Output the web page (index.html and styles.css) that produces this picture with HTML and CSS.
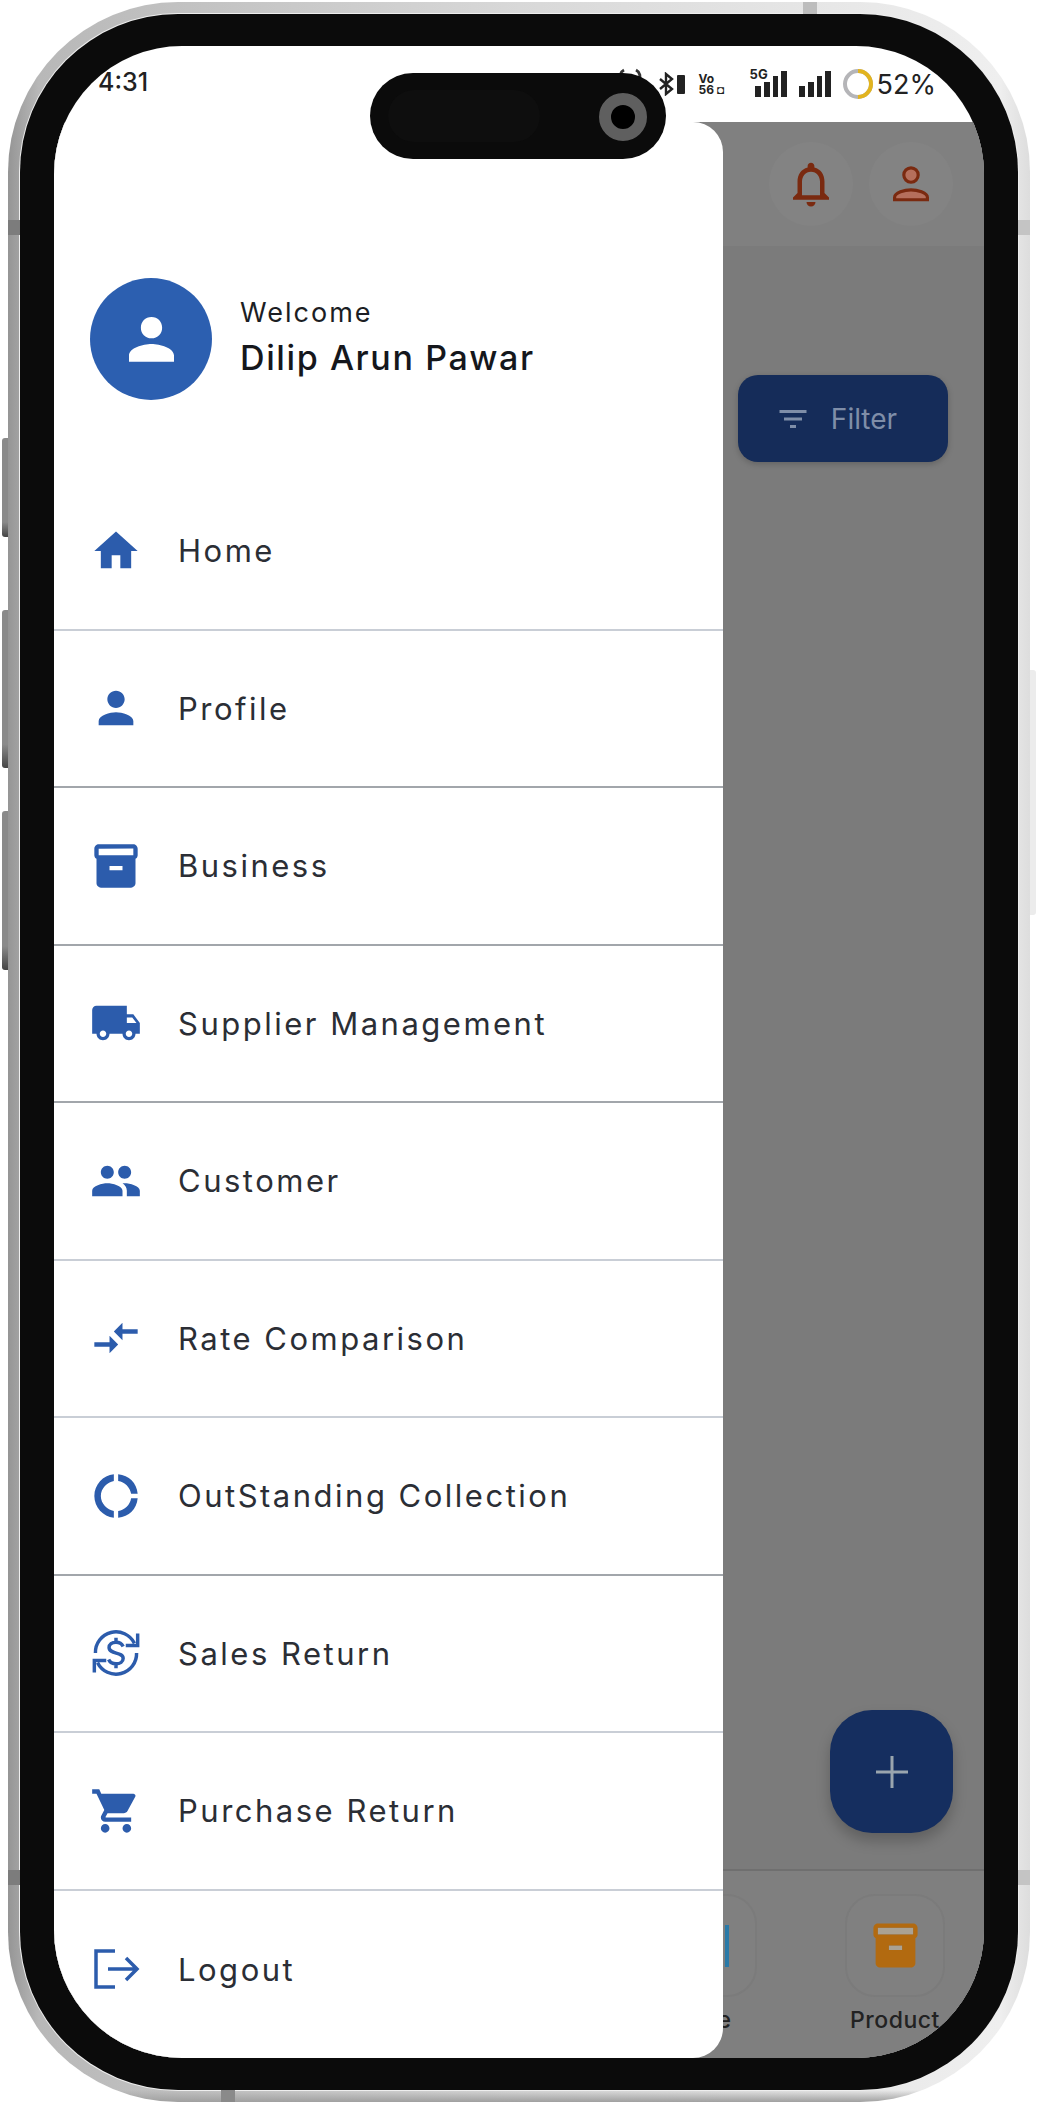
FILE: index.html
```html
<!DOCTYPE html>
<html>
<head>
    <title>Menu</title>
    <link rel="stylesheet" href="styles.css">
</head>
<body>
    <div class="phone">
        <span class="side-btn btn-a"></span>
        <span class="side-btn btn-b"></span>
        <span class="side-btn btn-c"></span>
        <span class="side-btn btn-r"></span>
        <span class="band band-l1"></span>
        <span class="band band-l2"></span>
        <span class="band band-r1"></span>
        <span class="band band-r2"></span>
        <span class="band-h band-t"></span>
        <span class="band-h band-b"></span>

        <div class="bezel">
            <div class="screen">
                <div class="statusbar">
                    <span class="time">4:31</span>
                    <div class="status-right">
                        <svg class="vibrate" viewBox="0 0 28 14" width="28" height="14"><path d="M5 13C3 9 4 4 8 2M23 13c2-4 1-9-3-11" fill="none" stroke="#333" stroke-width="3"/></svg>
                        <svg class="bt" viewBox="0 0 18 24" width="18" height="24"><path d="M2 7l12 10-6 5V2l6 5L2 17" fill="none" stroke="#222" stroke-width="2.4"/></svg>
                        <span class="mini-batt"></span>
                        <span class="vo">Vo<br>56 ◘</span>
                        <span class="fiveg">5G</span>
                        <svg viewBox="0 0 32 26" width="32" height="26"><rect x="0" y="15" width="6" height="11" fill="#222"/><rect x="9" y="11" width="6" height="15" fill="#222"/><rect x="18" y="5" width="5" height="21" fill="#222"/><rect x="26" y="0" width="6" height="26" fill="#222"/></svg>
                        <svg class="sig2" viewBox="0 0 32 26" width="32" height="26"><rect x="0" y="15" width="6" height="11" fill="#222"/><rect x="9" y="11" width="6" height="15" fill="#222"/><rect x="18" y="5" width="5" height="21" fill="#222"/><rect x="26" y="0" width="6" height="26" fill="#222"/></svg>
                        <svg class="ring" viewBox="0 0 32 32" width="32" height="32"><circle cx="16" cy="16" r="13" fill="none" stroke="#b5b5b8" stroke-width="4"/><path d="M16 3a13 13 0 0 1 0 26" fill="none" stroke="#e2b41f" stroke-width="4"/></svg>
                        <span class="batt">52%</span>
                    </div>
                </div>

                <div class="app">
                    <div class="app-header">
                        <div class="round-btn">
                            <svg viewBox="0 0 24 24" width="54" height="54"><path fill="#7a2a10" d="M12 22c1.1 0 2-.9 2-2h-4c0 1.1.9 2 2 2zm6-6v-5c0-3.07-1.63-5.64-4.5-6.32V4c0-.83-.67-1.5-1.5-1.5s-1.5.67-1.5 1.5v.68C7.64 5.36 6 7.92 6 11v5l-2 2v1h16v-1l-2-2zm-2 1H8v-6c0-2.48 1.51-4.5 4-4.5s4 2.02 4 4.5v6z"/></svg>
                        </div>
                        <div class="round-btn">
                            <svg viewBox="0 0 24 24" width="54" height="54"><circle cx="12" cy="8" r="3.2" fill="#b56f5c" stroke="#7a2a10" stroke-width="1.4"/><path d="M4.7 19v-1c0-2.2 4.6-3.4 7.3-3.4s7.3 1.2 7.3 3.4v1z" fill="#b56f5c" stroke="#7a2a10" stroke-width="1.4"/></svg>
                        </div>
                    </div>
                    <div class="app-main">
                        <div class="filter-btn">
                            <svg viewBox="0 0 24 24" width="36" height="36"><path fill="#7f8ea8" d="M10 18h4v-2h-4v2zM3 6v2h18V6H3zm3 7h12v-2H6v2z"/></svg>
                            <span>Filter</span>
                        </div>
                        <div class="fab">
                            <svg viewBox="0 0 32 32" width="32" height="32"><path d="M16 0v32M0 16h32" stroke="#9aa5ae" stroke-width="3"/></svg>
                        </div>
                    </div>
                    <div class="app-nav">
                        <div class="nav-item">
                            <div class="tile"><span class="tile-blue"></span></div>
                            <span class="tile-label">Sale</span>
                        </div>
                        <div class="nav-item">
                            <div class="tile">
                                <svg viewBox="0 0 24 24" width="53" height="53"><path fill="#aaa294" d="M4 4h16v3H4zM9 12h6v2H9z"/><path fill="#b26a10" d="M20 2H4c-1 0-2 .9-2 2v3.01c0 .72.43 1.34 1 1.69V20c0 1.1 1.1 2 2 2h14c.9 0 2-.9 2-2V8.7c.57-.35 1-.97 1-1.69V4c0-1.1-1-2-2-2zm-5 12H9v-2h6v2zm5-7H4V4l16-.02V7z"/></svg>
                            </div>
                            <span class="tile-label">Product</span>
                        </div>
                    </div>

                    <div class="drawer">
                        <div class="drawer-head">
                            <div class="avatar">
                                <svg viewBox="0 0 24 24" width="75" height="75"><path fill="#fff" d="M12 11.6c2 0 3.4-1.5 3.4-3.4S14 4.8 12 4.8 8.6 6.300 8.600 8.200s1.400 3.400 3.400 3.400zm0 1.800c-2.700 0-7.200 1.300-7.200 3.700v2h14.400v-2c0-2.400-4.500-3.700-7.200-3.700z"/></svg>
                            </div>
                            <div>
                                <div class="welcome">Welcome</div>
                                <div class="username">Dilip Arun Pawar</div>
                            </div>
                        </div>

                        <div class="menu">
                            <div class="menu-row">
                                <svg class="ico" viewBox="0 0 24 24"><path d="M10 20v-6h4v6h5v-8h3L12 3 2 12h3v8z"/></svg>
                                <span>Home</span>
                            </div>
                            <div class="menu-row dark">
                                <svg class="ico" viewBox="0 0 24 24"><path d="M12 12c2.210 0 4-1.790 4-4s-1.790-4-4-4-4 1.790-4 4 1.790 4 4 4zm0 2c-2.670 0-8 1.340-8 4v2h16v-2c0-2.660-5.330-4-8-4z"/></svg>
                                <span>Profile</span>
                            </div>
                            <div class="menu-row dark">
                                <svg class="ico" viewBox="0 0 24 24"><path d="M20 2H4c-1 0-2 .9-2 2v3.010c0 .72.43 1.340 1 1.690V20c0 1.100 1.100 2 2 2h14c.9 0 2-.9 2-2V8.700c.57-.35 1-.97 1-1.690V4c0-1.100-1-2-2-2zm-5 12H9v-2h6v2zm5-7H4V4l16-.02V7z"/></svg>
                                <span>Business</span>
                            </div>
                            <div class="menu-row dark">
                                <svg class="ico" viewBox="0 0 24 24"><path d="M20 8h-3V4H3c-1.100 0-2 .9-2 2v11h2c0 1.660 1.340 3 3 3s3-1.340 3-3h6c0 1.660 1.340 3 3 3s3-1.340 3-3h2v-5l-3-4zM6 18.500c-.83 0-1.500-.67-1.500-1.500s.67-1.500 1.500-1.500 1.500.67 1.500 1.500-.67 1.500-1.500 1.500zm13.500-9l1.960 2.500H17V9.500h2.500zm-1.500 9c-.83 0-1.500-.67-1.500-1.500s.67-1.500 1.500-1.500 1.500.67 1.500 1.500-.67 1.500-1.500 1.500z"/></svg>
                                <span>Supplier Management</span>
                            </div>
                            <div class="menu-row">
                                <svg class="ico" viewBox="0 0 24 24"><path d="M16 11c1.660 0 2.990-1.340 2.990-3S17.660 5 16 5c-1.660 0-3 1.340-3 3s1.340 3 3 3zm-8 0c1.660 0 2.990-1.340 2.990-3S9.660 5 8 5C6.340 5 5 6.340 5 8s1.340 3 3 3zm0 2c-2.330 0-7 1.170-7 3.500V19h14v-2.500c0-2.330-4.670-3.500-7-3.500zm8 0c-.29 0-.62.02-.97.05 1.160.84 1.970 1.970 1.970 3.450V19h6v-2.500c0-2.330-4.670-3.500-7-3.500z"/></svg>
                                <span>Customer</span>
                            </div>
                            <div class="menu-row">
                                <svg class="ico" viewBox="0 0 24 24"><path d="M9.010 14H2v2h7.010v3L13 15l-3.990-4v3zm5.980-1v-3H22V8h-7.010V5L11 9l3.990 4z"/></svg>
                                <span>Rate Comparison</span>
                            </div>
                            <div class="menu-row dark">
                                <svg class="ico" viewBox="0 0 24 24"><path d="M11 5.080V2c-5 .5-9 4.810-9 10s4 9.500 9 10v-3.080c-3-.48-6-3.400-6-6.920s3-6.440 6-6.920zM18.970 11H22c-.47-5-4-8.530-9-9v3.080C16 5.510 18.540 8 18.970 11zM13 18.920V22c5-.47 8.530-4 9-9h-3.030c-.43 3-2.970 5.490-5.970 5.920z"/></svg>
                                <span>OutStanding Collection</span>
                            </div>
                            <div class="menu-row">
                                <svg class="ico" viewBox="0 0 24 24"><path d="M2.500 12a9.500 9.500 0 0 1 18-4.500M22 3v5.500h-5.500M21.500 12a9.500 9.500 0 0 1-18 4.500M2 21v-5.500h5.500M15.300 9c-.6-1.300-1.700-2-3.300-2-1.800 0-3.200 1-3.200 2.500 0 3.300 6.500 1.800 6.500 5 0 1.500-1.500 2.500-3.300 2.500-1.600 0-2.800-.7-3.400-2M12 5v2M12 17v2" fill="none" stroke="#2c5cac" stroke-width="1.600"/></svg>
                                <span>Sales Return</span>
                            </div>
                            <div class="menu-row">
                                <svg class="ico" viewBox="0 0 24 24"><path d="M7 18c-1.100 0-1.990.9-1.990 2S5.900 22 7 22s2-.9 2-2-.9-2-2-2zM1 2v2h2l3.600 7.590-1.350 2.450c-.16.28-.25.61-.25.96 0 1.100.9 2 2 2h12v-2H7.420c-.14 0-.25-.11-.25-.25l.03-.12.9-1.630h7.450c.75 0 1.410-.41 1.750-1.030l3.580-6.490c.08-.14.12-.31.12-.48 0-.55-.45-1-1-1H5.210l-.94-2H1zm16 16c-1.100 0-1.990.9-1.990 2s.89 2 1.990 2 2-.9 2-2-.9-2-2-2z"/></svg>
                                <span>Purchase Return</span>
                            </div>
                            <div class="menu-row last">
                                <svg class="ico" viewBox="0 0 52 52"><path d="M25 8H6v36h19M18 26h29M36 15l11 11-11 11" fill="none" stroke="#2c5cac" stroke-width="3.500"/></svg>
                                <span>Logout</span>
                            </div>
                        </div>
                    </div>
                </div>

                <div class="island">
                    <span class="island-pill"></span>
                    <span class="camera"></span>
                </div>
            </div>
        </div>
    </div>
</body>
</html>
```

FILE: styles.css
```css
body {
    margin: 0;
    background: #fff;
    font-family: Inter, "Liberation Sans", sans-serif;
}
.phone {
    position: relative;
    width: 1022px;
    height: 2100px;
    margin: 2px 0 0 8px;
    padding: 12px;
    box-sizing: border-box;
    border-radius: 170px;
    background:
        linear-gradient(to top, #a0a0a0, rgba(160, 160, 160, 0) 12px),
        linear-gradient(to right, #959595 0%, #b8b8b8 3%, #d8d8d8 50%, #efefef 97%, #dddddd 100%);
}
.side-btn {
    position: absolute;
    left: -6px;
    width: 6px;
    border-radius: 3px 0 0 3px;
    background: linear-gradient(to bottom, #8a8a8a 85%, #444);
}
.btn-a { top: 436px; height: 99px; }
.btn-b { top: 608px; height: 158px; }
.btn-c { top: 809px; height: 159px; }
.btn-r {
    left: auto;
    right: -6px;
    top: 668px;
    height: 245px;
    border-radius: 0 3px 3px 0;
    background: #ececec;
}
.band {
    position: absolute;
    width: 12px;
    height: 15px;
    background: #7c7c7c;
}
.band-l1 { left: 0; top: 218px; }
.band-l2 { left: 0; top: 1868px; }
.band-r1 { right: 0; top: 218px; background: #c4c4c4; }
.band-r2 { right: 0; top: 1868px; background: #c4c4c4; }
.band-h {
    position: absolute;
    width: 14px;
    height: 12px;
    background: #bdbdbd;
}
.band-t { left: 795px; top: 0; }
.band-b { left: 213px; bottom: 0; background: #8a8a8a; }

.bezel {
    height: 100%;
    padding: 32px 34px;
    box-sizing: border-box;
    border-radius: 158px;
    background: #0b0b0b;
    box-shadow: 0 0 0 1px #eeeeee;
}
.screen {
    position: relative;
    display: flex;
    flex-direction: column;
    height: 100%;
    overflow: hidden;
    border-radius: 128px;
    background: #fff;
}

/* status bar */
.statusbar {
    display: flex;
    justify-content: space-between;
    height: 76px;
    flex-shrink: 0;
    padding: 20px 48px 0 44px;
    box-sizing: border-box;
    color: #222;
}
.time {
    font-size: 25px;
    font-weight: 500;
    line-height: 32px;
}
.status-right {
    display: flex;
    align-items: center;
    height: 36px;
}
.vibrate {
    align-self: flex-start;
    margin-top: 2px;
    margin-right: 14px;
}
.bt { margin-right: 1px; }
.mini-batt {
    width: 8px;
    height: 19px;
    margin-right: 14px;
    background: #222;
    border-radius: 1px;
}
.vo {
    width: 30px;
    margin-right: 21px;
    font-size: 12px;
    font-weight: 700;
    line-height: 11px;
}
.fiveg {
    align-self: flex-start;
    margin-right: -11px;
    font-size: 13px;
    font-weight: 700;
    width: 16px;
}
.sig2 { margin-left: 12px; }
.ring { margin: 0 3px 0 11px; }
.batt {
    font-size: 27px;
    font-weight: 400;
}

/* app behind the drawer */
.app {
    position: relative;
    flex: 1;
    display: flex;
    flex-direction: column;
    background: #7b7b7b;
}
.app-header {
    display: flex;
    justify-content: flex-end;
    align-items: center;
    gap: 16px;
    height: 124px;
    padding-right: 31px;
    background: #808080;
}
.round-btn {
    display: flex;
    align-items: center;
    justify-content: center;
    width: 84px;
    height: 84px;
    border-radius: 50%;
    background: #838383;
}
.app-main {
    flex: 1;
    display: flex;
    flex-direction: column;
    align-items: flex-end;
    justify-content: space-between;
    padding: 129px 36px 36px 0;
}
.filter-btn {
    display: flex;
    align-items: center;
    justify-content: center;
    gap: 20px;
    width: 210px;
    height: 87px;
    padding-right: 14px;
    box-sizing: border-box;
    border-radius: 20px;
    background: #152c59;
    color: #7f8ea8;
    font-size: 28px;
    box-shadow: 0 2px 6px rgba(0, 0, 0, 0.2);
}
.fab {
    display: flex;
    align-items: center;
    justify-content: center;
    width: 123px;
    height: 123px;
    margin-right: -5px;
    border-radius: 42px;
    background: #152e5f;
    box-shadow: 0 8px 14px rgba(0, 0, 0, 0.22);
}
.app-nav {
    display: flex;
    justify-content: flex-end;
    gap: 88px;
    height: 189px;
    padding: 23px 39px 0 0;
    box-sizing: border-box;
    border-top: 2px solid #6f6f6f;
    background: #7f7f7f;
}
.nav-item {
    display: flex;
    flex-direction: column;
    align-items: center;
    width: 100px;
}
.tile {
    display: flex;
    align-items: center;
    justify-content: center;
    width: 100px;
    height: 103px;
    box-sizing: border-box;
    border: 2px solid #7b7b7b;
    border-radius: 30px;
    background: #808080;
}
.tile-blue {
    width: 44px;
    height: 42px;
    box-sizing: border-box;
    border-right: 4px solid #2a7aa8;
}
.tile-label {
    margin-top: 9px;
    font-size: 23px;
    font-weight: 500;
    letter-spacing: 0.5px;
    color: #222;
}

/* drawer */
.drawer {
    position: absolute;
    top: 0;
    left: 0;
    bottom: 0;
    width: 669px;
    background: #fff;
    border-radius: 0 30px 30px 0;
}
.drawer-head {
    display: flex;
    align-items: center;
    gap: 28px;
    height: 351px;
    padding: 156px 0 73px 36px;
    box-sizing: border-box;
}
.avatar {
    display: flex;
    align-items: center;
    justify-content: center;
    width: 122px;
    height: 122px;
    border-radius: 50%;
    background: #2c5fb0;
}
.welcome {
    margin-top: -5px;
    font-size: 27px;
    letter-spacing: 2px;
    color: #1c1e24;
}
.username {
    margin-top: 8px;
    font-size: 34px;
    font-weight: 500;
    letter-spacing: 1.6px;
    color: #15171c;
}
.menu-row {
    display: flex;
    align-items: center;
    gap: 36px;
    height: 157.500px;
    padding-left: 36px;
    box-sizing: border-box;
    border-bottom: 2px solid #c9ced6;
    font-size: 31px;
    letter-spacing: 2.5px;
    color: #2b2e35;
}
.menu-row.dark { border-bottom-color: #a2a6ab; }
.menu-row.last { border-bottom: none; }
.ico {
    width: 52px;
    height: 52px;
    fill: #2c5cac;
    flex-shrink: 0;
}

/* camera cutout */
.island {
    position: absolute;
    top: 27px;
    left: 316px;
    width: 296px;
    height: 86px;
    border-radius: 43px;
    background: #0b0b0b;
}
.island-pill {
    position: absolute;
    top: 17px;
    left: 18px;
    width: 152px;
    height: 52px;
    border-radius: 26px;
    background: #0e0e0e;
}
.camera {
    position: absolute;
    top: 20px;
    left: 229px;
    width: 24px;
    height: 24px;
    border: 12px solid #5f5f5f;
    border-radius: 50%;
    background: #000;
}
```
